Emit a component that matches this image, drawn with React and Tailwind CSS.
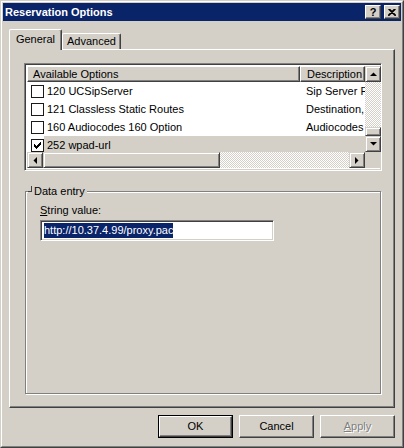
import React from 'react';

// classic 3D edges
const raised =
  'border border-t-white border-l-white border-r-[#404040] border-b-[#404040] shadow-[inset_-1px_-1px_#808080] bg-[#d4d0c8]';
const scrollBtn =
  'border border-t-[#d4d0c8] border-l-[#d4d0c8] border-r-[#404040] border-b-[#404040] shadow-[inset_1px_1px_#fff,inset_-1px_-1px_#808080] bg-[#d4d0c8]';
const sunken =
  'border border-t-[#808080] border-l-[#808080] border-r-white border-b-white shadow-[inset_1px_1px_#404040,inset_-1px_-1px_#d4d0c8]';
const dither = 'bg-[repeating-conic-gradient(#fff_0_25%,#d4d0c8_0_50%)] bg-[length:2px_2px]';

const Arrow = ({ dir }) => {
  const pts = {
    up: '0,4 7,4 3.5,0.5',
    down: '0,0 7,0 3.5,3.5',
    left: '4,0 4,7 0.5,3.5',
    right: '0,0 0,7 3.5,3.5',
  }[dir];
  const vertical = dir === 'up' || dir === 'down';
  return (
    <svg width={vertical ? 7 : 4} height={vertical ? 4 : 7}>
      <polygon points={pts} fill="#000" />
    </svg>
  );
};

const ScrollButton = ({ dir }) => (
  <div className={`flex h-[16px] w-[16px] shrink-0 items-center justify-center ${scrollBtn}`}>
    <Arrow dir={dir} />
  </div>
);

const Checkbox = ({ checked }) => (
  <div className="flex h-[13px] w-[13px] shrink-0 items-center justify-center border border-[#1a1a1a] bg-white">
    {checked && (
      <svg width="7" height="7" viewBox="0 0 7 7" shapeRendering="crispEdges">
        <rect x="0" y="2" width="1" height="3" />
        <rect x="1" y="3" width="1" height="3" />
        <rect x="2" y="4" width="1" height="3" />
        <rect x="3" y="3" width="1" height="3" />
        <rect x="4" y="2" width="1" height="3" />
        <rect x="5" y="1" width="1" height="3" />
        <rect x="6" y="0" width="1" height="3" />
      </svg>
    )}
  </div>
);

const options = [
  { label: '120 UCSipServer', desc: 'Sip Server F' },
  { label: '121 Classless Static Routes', desc: 'Destination,' },
  { label: '160 Audiocodes 160 Option', desc: 'Audiocodes' },
  { label: '252 wpad-url', desc: '', checked: true, selected: true },
];

function TitleBar() {
  return (
    <div className="flex h-[18px] shrink-0 items-center justify-between bg-[#0a246a] pl-[2px] pr-[1px]">
      <span className="text-[11px] font-bold leading-none text-white">Reservation Options</span>
      <div className="flex gap-[3px]">
        <div className={`flex h-[14px] w-[16px] items-center justify-center ${raised}`}>
          <span className="text-[11px] font-bold leading-none">?</span>
        </div>
        <div className={`flex h-[14px] w-[16px] items-center justify-center ${raised}`}>
          <svg width="8" height="7" viewBox="0 0 8 7">
            <path d="M0.5 0 L7.5 7 M1.5 0 L8 6.5 M7.5 0 L0.5 7 M6.5 0 L0 6.5" stroke="#000" strokeWidth="1.1" />
          </svg>
        </div>
      </div>
    </div>
  );
}

function OptionList() {
  return (
    <div className={`h-[108px] w-[358px] bg-white p-[2px] ${sunken}`}>
      <div className="flex h-full">
        <div className="flex w-[338px] flex-col">
          {/* column headers */}
          <div className="flex h-[16px] shrink-0">
            <div className={`flex w-[273px] items-center pl-[5px] ${raised}`}>Available Options</div>
            <div className={`flex w-[65px] items-center overflow-hidden whitespace-nowrap pl-[6px] ${raised}`}>
              Description
            </div>
          </div>
          <div className="h-[72px] overflow-hidden">
            {options.map((o) => (
              <div key={o.label} className="flex h-[18px] items-center">
                <div className="flex h-full w-[17px] shrink-0 items-center justify-end bg-white">
                  <Checkbox checked={o.checked} />
                </div>
                <div
                  className={`flex h-full flex-1 items-center whitespace-nowrap ${
                    o.selected ? 'bg-[#d4d0c8]' : 'bg-white'
                  }`}
                >
                  <span className="w-[256px] shrink-0 pl-[3px]">{o.label}</span>
                  <span className="w-[65px] overflow-hidden pl-[6px]">{o.desc}</span>
                </div>
              </div>
            ))}
          </div>
          {/* horizontal scrollbar */}
          <div className="flex h-[16px] shrink-0">
            <ScrollButton dir="left" />
            <div className={`h-[16px] w-[177px] ${scrollBtn}`} />
            <div className={`h-[16px] flex-1 ${dither}`} />
            <ScrollButton dir="right" />
          </div>
        </div>
        {/* vertical scrollbar */}
        <div className="flex w-[16px] flex-col">
          <ScrollButton dir="up" />
          <div className={`flex-1 ${dither}`} />
          <div className={`h-[9px] w-[16px] shrink-0 ${scrollBtn}`} />
          <ScrollButton dir="down" />
          <div className="h-[16px] shrink-0 bg-[#d4d0c8]" />
        </div>
      </div>
    </div>
  );
}

function DataEntry() {
  return (
    <div className="relative ml-px mt-[20px] h-[203px] w-[356px] border border-[#808080] shadow-[inset_1px_1px_#fff,1px_1px_#fff]">
      <div className="absolute -top-[8px] left-[2px] flex items-end bg-[#d4d0c8] pr-[2px]">
        <span className="mb-[6px] mr-[2px] h-[6px] w-[4px] border-b border-r border-[#404040]" />
        <span className="leading-[14px]">Data entry</span>
      </div>
      <div className="pl-[14px] pt-[12px]">
        <div className="leading-[13px]">
          <span className="underline">S</span>tring value:
        </div>
        <div className={`mt-[3px] flex h-[21px] w-[234px] items-center bg-white pl-[3px] ${sunken}`}>
          <span className="bg-[#0a246a] leading-[15px] text-white">http://10.37.4.99/proxy.pac</span>
        </div>
      </div>
    </div>
  );
}

export default function App() {
  return (
    <div className="h-[448px] w-[404px] border border-t-[#d4d0c8] border-l-[#d4d0c8] border-r-[#404040] border-b-[#404040] font-['Liberation_Sans',Arial,sans-serif] text-[11px] leading-none text-black">
      <div className="flex h-full flex-col border border-t-white border-l-white border-r-[#808080] border-b-[#808080] bg-[#d4d0c8] p-px">
        <TitleBar />
        <div className="flex flex-col px-[6px] pt-[8px]">
          {/* tabs */}
          <div className="flex h-[20px] items-end">
            <div className="relative z-10 -mb-px flex h-[21px] w-[53px] items-center justify-center rounded-t-[2px] border-l border-t border-r border-l-white border-t-white border-r-[#404040] bg-[#d4d0c8] pb-[2px] shadow-[inset_-1px_0_#808080]">
              General
            </div>
            <div className="flex h-[16px] w-[59px] items-center justify-center rounded-t-[2px] border-l border-t border-r border-l-white border-t-white border-r-[#404040] bg-[#d4d0c8] shadow-[inset_-1px_0_#808080]">
              Advanced
            </div>
          </div>
          {/* tab page */}
          <div className={`h-[359px] w-[386px] pl-[14px] pt-[13px] ${raised}`}>
            <OptionList />
            <DataEntry />
          </div>
          {/* dialog buttons */}
          <div className="mt-[7px] flex justify-end gap-[6px]">
            <div className="h-[23px] w-[75px] border border-black">
              <div className={`flex h-full items-center justify-center ${raised}`}>OK</div>
            </div>
            <div className={`flex h-[23px] w-[75px] items-center justify-center ${raised}`}>Cancel</div>
            <div className={`flex h-[23px] w-[75px] items-center justify-center text-[#808080] [text-shadow:1px_1px_#fff] ${raised}`}>
              <span>
                <span className="underline">A</span>pply
              </span>
            </div>
          </div>
        </div>
      </div>
    </div>
  );
}
